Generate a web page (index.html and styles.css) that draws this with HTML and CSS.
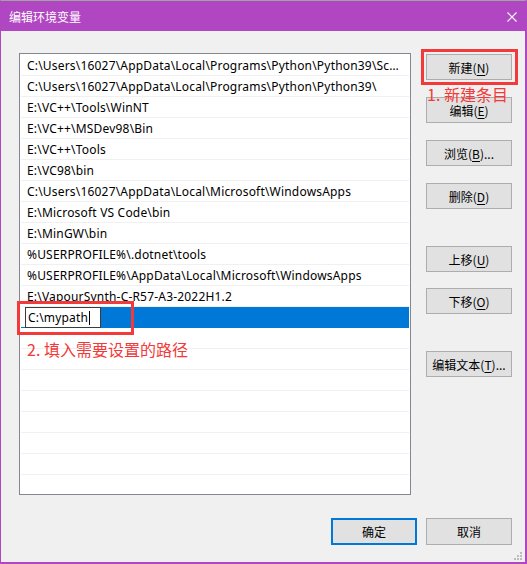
FILE: index.html
```html
<!DOCTYPE html>
<html lang="zh-CN">
<head>
<meta charset="utf-8">
<title>编辑环境变量</title>
<link rel="stylesheet" href="styles.css">
</head>
<body>
<div class="window">
  <div class="titlebar">
    <span class="title">编辑环境变量</span>
    <svg class="close" width="10" height="10" viewBox="0 0 10 10"><path d="M0.5 0.5 L9.5 9.5 M9.5 0.5 L0.5 9.5" stroke="#fff" stroke-width="1.1" fill="none"/></svg>
  </div>
  <div class="body">
    <div class="main">
      <div class="list">
        <div class="row">C:\Users\16027\AppData\Local\Programs\Python\Python39\Scripts\</div>
        <div class="row">C:\Users\16027\AppData\Local\Programs\Python\Python39\</div>
        <div class="row">E:\VC++\Tools\WinNT</div>
        <div class="row">E:\VC++\MSDev98\Bin</div>
        <div class="row">E:\VC++\Tools</div>
        <div class="row">E:\VC98\bin</div>
        <div class="row">C:\Users\16027\AppData\Local\Microsoft\WindowsApps</div>
        <div class="row">E:\Microsoft VS Code\bin</div>
        <div class="row">E:\MinGW\bin</div>
        <div class="row">%USERPROFILE%\.dotnet\tools</div>
        <div class="row">%USERPROFILE%\AppData\Local\Microsoft\WindowsApps</div>
        <div class="row">E:\VapourSynth-C-R57-A3-2022H1.2</div>
        <div class="row selected">
          <div class="edit-cell"><div class="edit">C:\mypath<span class="caret"></span></div></div>
        </div>
        <div class="row"></div>
        <div class="row"></div>
        <div class="row"></div>
        <div class="row"></div>
        <div class="row"></div>
        <div class="row"></div>
        <div class="row"></div>
        <div class="row last"></div>
      </div>
      <div class="side">
        <div class="btn">新建(<u>N</u>)</div>
        <div class="btn gap1">编辑(<u>E</u>)</div>
        <div class="btn gap1">浏览(<u>B</u>)...</div>
        <div class="btn gap1">删除(<u>D</u>)</div>
        <div class="btn gap2">上移(<u>U</u>)</div>
        <div class="btn gap3">下移(<u>O</u>)</div>
        <div class="btn gap2">编辑文本(<u>T</u>)...</div>
      </div>
    </div>
    <div class="footer">
      <div class="btn tall default">确定</div>
      <div class="btn tall">取消</div>
    </div>
  </div>
  <div class="mark mark1"></div>
  <div class="note note1">1. 新建条目</div>
  <div class="mark mark2"></div>
  <div class="note note2">2. 填入需要设置的路径</div>
  <svg class="grip" width="9" height="9" viewBox="0 0 9 9" fill="#bcbcbc">
    <rect x="6" y="0" width="2" height="2"/>
    <rect x="3" y="3" width="2" height="2"/><rect x="6" y="3" width="2" height="2"/>
    <rect x="0" y="6" width="2" height="2"/><rect x="3" y="6" width="2" height="2"/><rect x="6" y="6" width="2" height="2"/>
  </svg>
</div>
</body>
</html>
```

FILE: styles.css
```css
* { box-sizing: border-box; }
html, body { margin: 0; padding: 0; }
body {
  width: 527px;
  height: 564px;
  overflow: hidden;
  font-family: "Noto Sans", "Noto Sans CJK SC", sans-serif;
  font-size: 12px;
  color: #000;
  background: #fff;
}
.window {
  position: relative;
  width: 527px;
  height: 564px;
  background: #f0f0f0;
  border-top: 1px solid #a2a2a2;
  border-left: 1px solid #b146c2;
  border-right: 2px solid #b146c2;
  border-bottom: 2px solid #b146c2;
  display: flex;
  flex-direction: column;
}
.titlebar {
  height: 30px;
  background: #b146c2;
  display: flex;
  align-items: center;
  justify-content: space-between;
  padding: 1px 8px 0 8px;
}
.title {
  color: #fff;
  font-family: "Noto Sans CJK SC", sans-serif;
  font-size: 12px;
}
.close { display: block; }
.body {
  padding: 22px 13px 0 18px;
  flex: 1;
  display: flex;
  flex-direction: column;
}
.main {
  display: flex;
  gap: 15px;
}
.list {
  width: 392px;
  height: 442px;
  background: #fff;
  border: 1px solid #828790;
  padding: 1px 1px 0 1px;
  overflow: hidden;
}
.row {
  height: 21px;
  line-height: 22px;
  border-bottom: 1px solid #f0f0f0;
  padding: 0 6px;
  letter-spacing: 0.19px;
  white-space: nowrap;
  overflow: hidden;
  text-overflow: ellipsis;
}
.row.selected {
  background: #0078d7;
  padding: 0;
  display: flex;
  border-bottom-color: #0078d7;
  overflow: visible;
}
.edit-cell {
  width: 79px;
  height: 20px;
  background: #fff;
  padding-left: 4px;
}
.edit {
  width: 76px;
  height: 21px;
  border: 1px solid #3c3c3c;
  background: #fff;
  padding-left: 2px;
  line-height: 19px;
  display: flex;
  align-items: center;
}
.caret {
  display: inline-block;
  width: 1px;
  height: 14px;
  background: #000;
  margin-left: 1px;
}
.side {
  display: flex;
  flex-direction: column;
  padding-top: 1px;
}
.btn {
  width: 86px;
  height: 26px;
  background: #e1e1e1;
  border: 1px solid #adadad;
  display: flex;
  align-items: center;
  justify-content: center;
  font-family: "Noto Sans CJK SC", sans-serif;
  font-size: 12px;
}
.btn u { text-underline-offset: 2px; }
.gap1 { margin-top: 17px; }
.gap2 { margin-top: 37px; }
.gap3 { margin-top: 16px; }
.footer {
  display: flex;
  justify-content: flex-end;
  gap: 9px;
  margin-top: 23px;
}
.btn.tall { height: 27px; }
.btn.default { border: 2px solid #0078d7; }
.mark {
  position: absolute;
  border: 3px solid #f23a3a;
}
.mark1 { left: 420px; top: 48px; width: 97px; height: 36px; }
.mark2 { left: 16px; top: 300px; width: 117px; height: 34px; }
.note {
  position: absolute;
  color: #f23a3a;
  font-family: "Noto Sans CJK SC", sans-serif;
  font-size: 16px;
  line-height: 20px;
  white-space: nowrap;
}
.note1 { left: 426px; top: 83px; }
.note2 { left: 26px; top: 338px; }
.grip {
  position: absolute;
  right: 2px;
  bottom: 1px;
}
```
